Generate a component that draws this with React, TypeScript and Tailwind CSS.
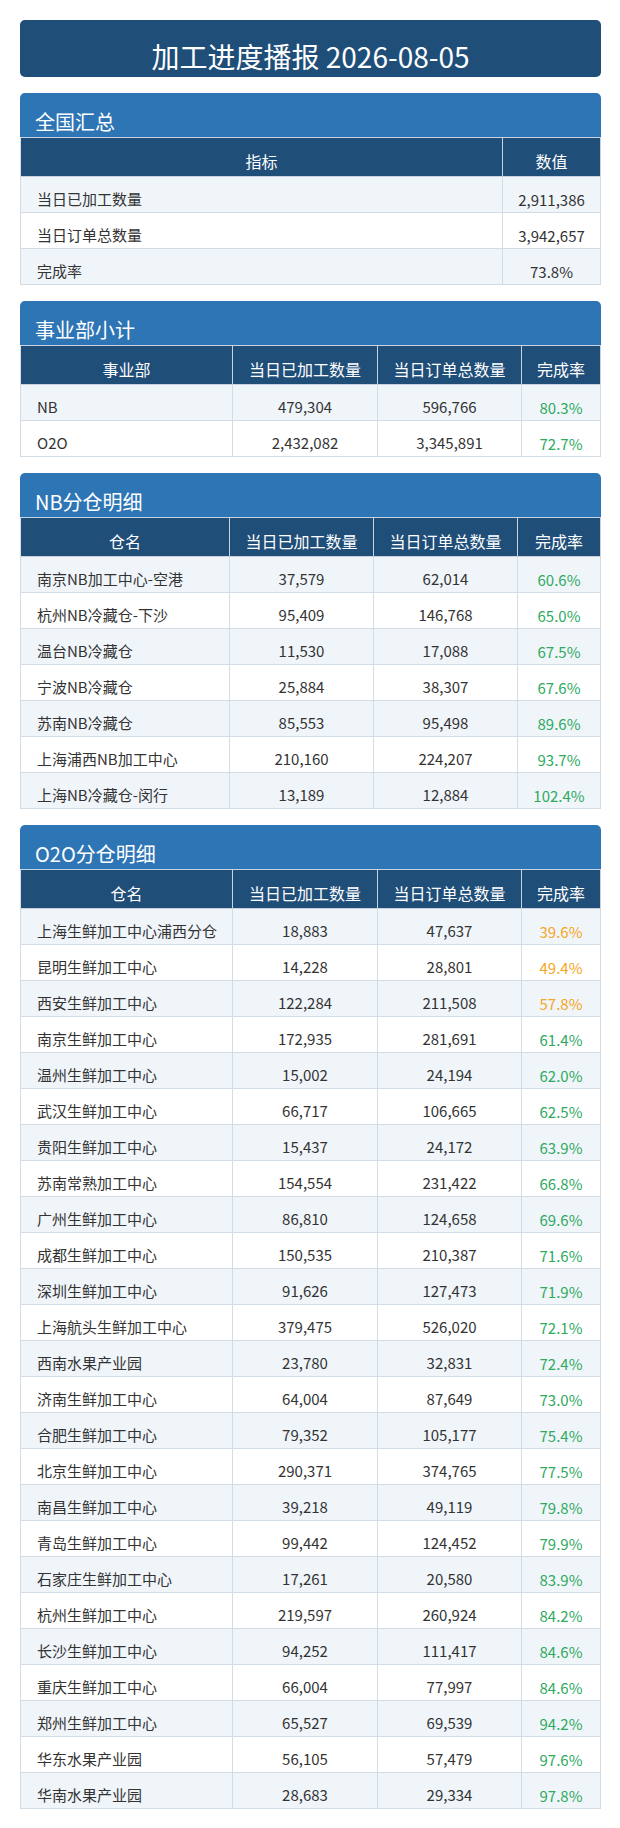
import React from "react";

type Row = [string, string, string, string];

const summary: [string, string][] = [
  ["当日已加工数量", "2,911,386"],
  ["当日订单总数量", "3,942,657"],
  ["完成率", "73.8%"],
];

const divisions: Row[] = [
  ["NB", "479,304", "596,766", "80.3%"],
  ["O2O", "2,432,082", "3,345,891", "72.7%"],
];

const nbRows: Row[] = [
  ["南京NB加工中心-空港", "37,579", "62,014", "60.6%"],
  ["杭州NB冷藏仓-下沙", "95,409", "146,768", "65.0%"],
  ["温台NB冷藏仓", "11,530", "17,088", "67.5%"],
  ["宁波NB冷藏仓", "25,884", "38,307", "67.6%"],
  ["苏南NB冷藏仓", "85,553", "95,498", "89.6%"],
  ["上海浦西NB加工中心", "210,160", "224,207", "93.7%"],
  ["上海NB冷藏仓-闵行", "13,189", "12,884", "102.4%"],
];

const o2oRows: Row[] = [
  ["上海生鲜加工中心浦西分仓", "18,883", "47,637", "39.6%"],
  ["昆明生鲜加工中心", "14,228", "28,801", "49.4%"],
  ["西安生鲜加工中心", "122,284", "211,508", "57.8%"],
  ["南京生鲜加工中心", "172,935", "281,691", "61.4%"],
  ["温州生鲜加工中心", "15,002", "24,194", "62.0%"],
  ["武汉生鲜加工中心", "66,717", "106,665", "62.5%"],
  ["贵阳生鲜加工中心", "15,437", "24,172", "63.9%"],
  ["苏南常熟加工中心", "154,554", "231,422", "66.8%"],
  ["广州生鲜加工中心", "86,810", "124,658", "69.6%"],
  ["成都生鲜加工中心", "150,535", "210,387", "71.6%"],
  ["深圳生鲜加工中心", "91,626", "127,473", "71.9%"],
  ["上海航头生鲜加工中心", "379,475", "526,020", "72.1%"],
  ["西南水果产业园", "23,780", "32,831", "72.4%"],
  ["济南生鲜加工中心", "64,004", "87,649", "73.0%"],
  ["合肥生鲜加工中心", "79,352", "105,177", "75.4%"],
  ["北京生鲜加工中心", "290,371", "374,765", "77.5%"],
  ["南昌生鲜加工中心", "39,218", "49,119", "79.8%"],
  ["青岛生鲜加工中心", "99,442", "124,452", "79.9%"],
  ["石家庄生鲜加工中心", "17,261", "20,580", "83.9%"],
  ["杭州生鲜加工中心", "219,597", "260,924", "84.2%"],
  ["长沙生鲜加工中心", "94,252", "111,417", "84.6%"],
  ["重庆生鲜加工中心", "66,004", "77,997", "84.6%"],
  ["郑州生鲜加工中心", "65,527", "69,539", "94.2%"],
  ["华东水果产业园", "56,105", "57,479", "97.6%"],
  ["华南水果产业园", "28,683", "29,334", "97.8%"],
];

const fourHeaders = ["当日已加工数量", "当日订单总数量", "完成率"];

function Section({ title, children }: { title: string; children: React.ReactNode }) {
  return (
    <section className="mt-4 overflow-hidden rounded-t-[5px]">
      <h2 className="h-[44px] bg-[#2e75b6] pl-[15px] pt-[15px] text-[20px] leading-[28px] text-white">
        {title}
      </h2>
      <div className="border-l border-[#d3dbe5]">{children}</div>
    </section>
  );
}

function HeadRow({ cols, labels }: { cols: string; labels: string[] }) {
  return (
    <div className={`grid ${cols} h-[40px] border-t border-b border-[#c9d3df] bg-[#1f4e79] text-[16px] leading-[22px] text-white`}>
      {labels.map((l) => (
        <div key={l} className="border-r border-[#c9d3df] pt-[12px] text-center">
          {l}
        </div>
      ))}
    </div>
  );
}

function pctColor(v: string) {
  return parseFloat(v) < 60 ? "text-[#f5a623]" : "text-[#2eaa5e]";
}

function DataTable({ cols, rows }: { cols: string; rows: Row[] }) {
  return (
    <>
      {rows.map((r, i) => (
        <div
          key={r[0]}
          className={`grid ${cols} h-9 border-b border-[#d3dbe5] text-[15px] leading-5 text-[#333] ${i % 2 === 0 ? "bg-[#f0f5fa]" : "bg-white"}`}
        >
          <div className="border-r border-[#d3dbe5] pl-4 pt-[12px] whitespace-nowrap">{r[0]}</div>
          <div className="border-r border-[#d3dbe5] pt-[12px] text-center">{r[1]}</div>
          <div className="border-r border-[#d3dbe5] pt-[12px] text-center">{r[2]}</div>
          <div className={`border-r border-[#d3dbe5] pt-[13px] text-center ${pctColor(r[3])}`}>{r[3]}</div>
        </div>
      ))}
    </>
  );
}

export default function App() {
  return (
    <div className="bg-white pt-5 pb-5 pl-5 pr-[19px] font-['Noto_Sans_CJK_SC','Noto_Sans',sans-serif]">
      <div className="h-[57px] rounded-[5px] bg-[#1f4e79] pt-[18px] text-center text-[28px] leading-9 text-white">
        加工进度播报 2026-08-05
      </div>

      <Section title="全国汇总">
        <HeadRow cols="grid-cols-[482px_1fr]" labels={["指标", "数值"]} />
        {summary.map(([k, v], i) => (
          <div
            key={k}
            className={`grid h-9 grid-cols-[482px_1fr] border-b border-[#d3dbe5] text-[15px] leading-5 text-[#333] ${i % 2 === 0 ? "bg-[#f0f5fa]" : "bg-white"}`}
          >
            <div className="border-r border-[#d3dbe5] pl-4 pt-[12px]">{k}</div>
            <div className="border-r border-[#d3dbe5] pt-[13px] text-center">{v}</div>
          </div>
        ))}
      </Section>

      <Section title="事业部小计">
        <HeadRow cols="grid-cols-[212px_145px_144px_1fr]" labels={["事业部", ...fourHeaders]} />
        <DataTable cols="grid-cols-[212px_145px_144px_1fr]" rows={divisions} />
      </Section>

      <Section title="NB分仓明细">
        <HeadRow cols="grid-cols-[209px_144px_144px_1fr]" labels={["仓名", ...fourHeaders]} />
        <DataTable cols="grid-cols-[209px_144px_144px_1fr]" rows={nbRows} />
      </Section>

      <Section title="O2O分仓明细">
        <HeadRow cols="grid-cols-[212px_145px_144px_1fr]" labels={["仓名", ...fourHeaders]} />
        <DataTable cols="grid-cols-[212px_145px_144px_1fr]" rows={o2oRows} />
      </Section>
    </div>
  );
}
